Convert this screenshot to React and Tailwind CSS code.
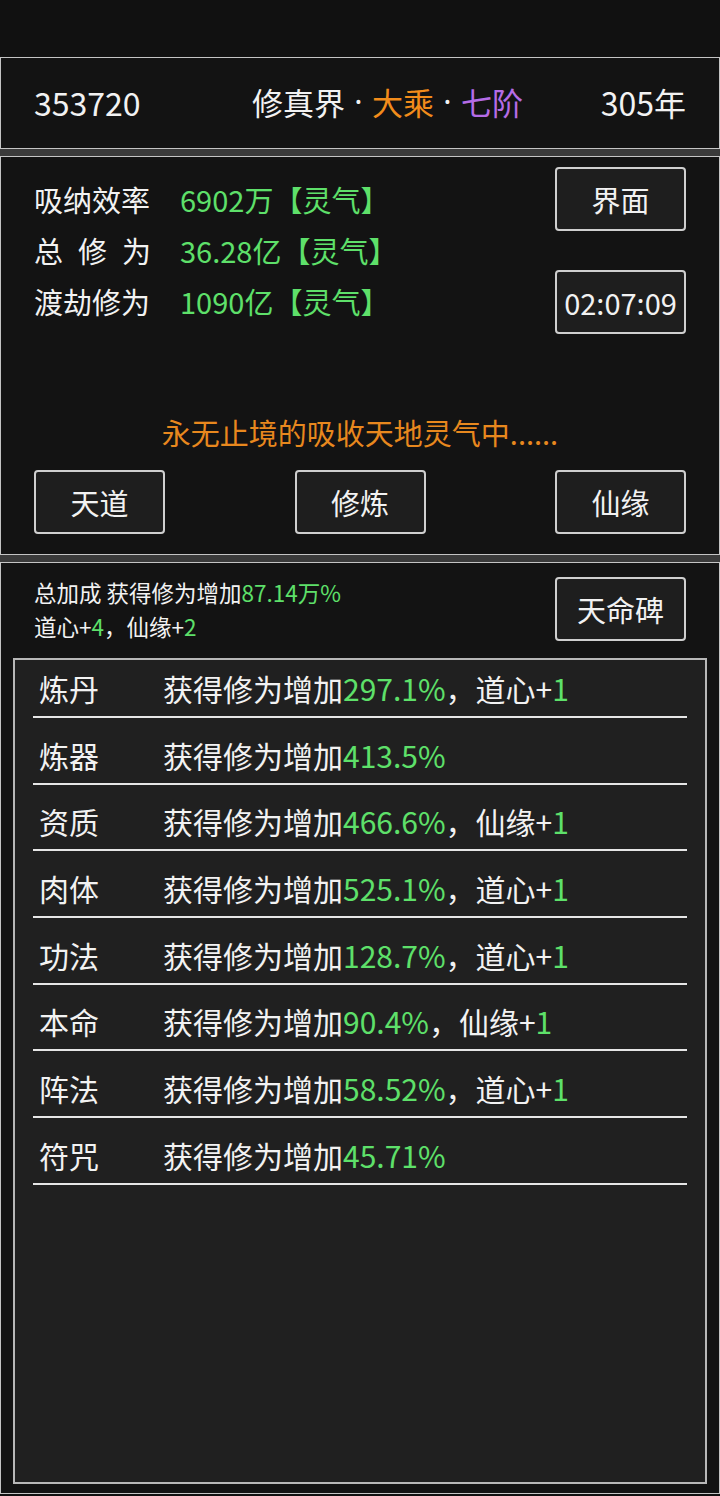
import React from 'react';

const font = { fontFamily: '"Noto Sans CJK SC", "Noto Sans", sans-serif' };

const stats = [
  { label: '吸纳效率', value: '6902万【灵气】' },
  { label: '总修为', value: '36.28亿【灵气】', spread: true },
  { label: '渡劫修为', value: '1090亿【灵气】' },
];

const bonuses = [
  { name: '炼丹', pct: '297.1%', extra: '道心' },
  { name: '炼器', pct: '413.5%' },
  { name: '资质', pct: '466.6%', extra: '仙缘' },
  { name: '肉体', pct: '525.1%', extra: '道心' },
  { name: '功法', pct: '128.7%', extra: '道心' },
  { name: '本命', pct: '90.4%', extra: '仙缘' },
  { name: '阵法', pct: '58.52%', extra: '道心' },
  { name: '符咒', pct: '45.71%' },
];

function Btn({ children, className = '' }) {
  return (
    <button
      className={
        'w-[131px] h-[64px] flex items-center justify-center rounded-[4px] border-2 border-[#cfcfcf] bg-[#1e1e1e] text-[29px] text-[#f2f2f2] leading-none ' +
        className
      }
    >
      {children}
    </button>
  );
}

function Label({ text, spread }) {
  if (!spread) return <span>{text}</span>;
  return (
    <span className="flex justify-between w-[117px]">
      {text.split('').map((c, i) => (
        <span key={i}>{c}</span>
      ))}
    </span>
  );
}

function Dot() {
  return <span className="inline-block w-[27px] text-center" style={{ fontFamily: '"Noto Sans", sans-serif' }}>·</span>;
}

export default function App() {
  return (
    <div className="w-[720px] h-[1496px] bg-[#111111] flex flex-col text-[#f2f2f2]" style={font}>
      <div className="h-[57px] shrink-0" />

      <div className="flex flex-col gap-[7px] bg-[#3a3a3a]">
        {/* header: id, realm, years */}
        <div className="h-[92px] border border-[#c4c4c4] bg-[#131313] flex items-center px-[33px] pb-[3px]">
          <span className="w-[218px] text-[32px] leading-none">353720</span>
          <span className="text-[31px] leading-none flex items-center">
            修真界<Dot /><span className="text-[#f28c1b]">大乘</span><Dot /><span className="text-[#b56ce6]">七阶</span>
          </span>
          <span className="ml-auto text-[32px] leading-none">305年</span>
        </div>

        {/* cultivation stats */}
        <div className="h-[399px] border border-[#c4c4c4] bg-[#131313] px-[33px] pt-[10px] flex flex-col">
          <div className="flex justify-between">
            <div className="pt-[7px] flex flex-col">
              {stats.map((s) => (
                <div key={s.label} className="flex items-center text-[29px] leading-[51px]">
                  <span className="w-[146px] flex">
                    <Label text={s.label} spread={s.spread} />
                  </span>
                  <span className="text-[#5ee06a]">{s.value}</span>
                </div>
              ))}
            </div>
            <div className="flex flex-col gap-[39px]">
              <Btn>界面</Btn>
              <Btn>02:07:09</Btn>
            </div>
          </div>
          <div className="mt-[78px] text-center text-[29px] leading-[40px] text-[#e8881e]">
            永无止境的吸收天地灵气中......
          </div>
          <div className="mt-[18px] flex justify-between">
            <Btn>天道</Btn>
            <Btn>修炼</Btn>
            <Btn>仙缘</Btn>
          </div>
        </div>

        {/* bonus list */}
        <div className="h-[932px] border border-[#c4c4c4] bg-[#131313] flex flex-col">
          <div className="flex justify-between px-[33px] pt-[12px]">
            <div className="text-[22.5px] leading-[34px]">
              <div>
                总加成 获得修为增加<span className="text-[#5ee06a]">87.14万%</span>
              </div>
              <div>
                道心+<span className="text-[#5ee06a]">4</span>，仙缘+<span className="text-[#5ee06a]">2</span>
              </div>
            </div>
            <Btn className="mt-[2px]">天命碑</Btn>
          </div>

          <div className="mx-[12px] mt-[15px] h-[826px] border-2 border-[#b8b8b8] bg-[#202020] px-[18px]">
            {bonuses.map((b, i) => (
              <div
                key={b.name}
                className={
                  'flex items-end pb-[8px] pl-[6px] border-b-2 border-[#e6e6e6] text-[30px] leading-[40px] ' +
                  (i === 0 ? 'h-[58px]' : 'h-[66.67px]')
                }
              >
                <span className="w-[124px]">{b.name}</span>
                <span>
                  获得修为增加<span className="text-[#5ee06a]">{b.pct}</span>
                  {b.extra && (
                    <>
                      ，{b.extra}+<span className="text-[#5ee06a]">1</span>
                    </>
                  )}
                </span>
              </div>
            ))}
          </div>
        </div>
      </div>
    </div>
  );
}
